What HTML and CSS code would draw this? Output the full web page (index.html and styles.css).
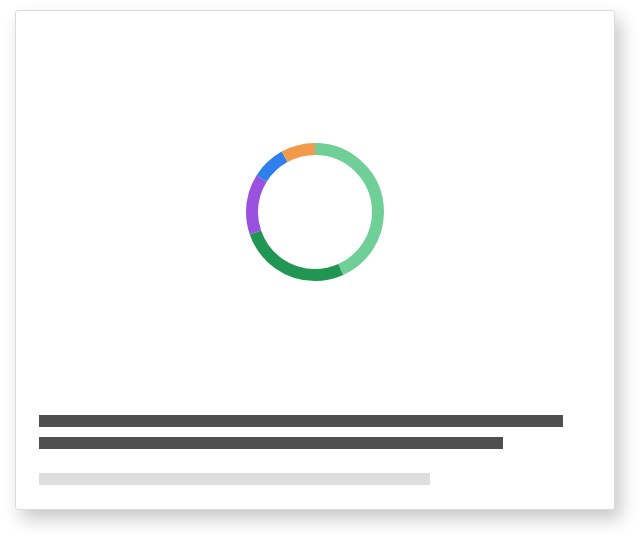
FILE: index.html
```html
<!DOCTYPE html>
<html>
<head>
<meta charset="utf-8">
<link rel="stylesheet" href="styles.css">
</head>
<body>
<div class="card">
  <div class="chart-area">
    <svg class="donut" width="140" height="140" viewBox="0 0 140 140">
      <g transform="rotate(-90 70 70)" fill="none" stroke-width="12">
        <circle cx="70" cy="70" r="63" stroke="#6fcf97" stroke-dasharray="171.1 395.84" stroke-dashoffset="0"/>
        <circle cx="70" cy="70" r="63" stroke="#219653" stroke-dasharray="104.4 395.84" stroke-dashoffset="-171.1"/>
        <circle cx="70" cy="70" r="63" stroke="#9b51e0" stroke-dasharray="56.1 395.84" stroke-dashoffset="-275.5"/>
        <circle cx="70" cy="70" r="63" stroke="#2f80ed" stroke-dasharray="31.9 395.84" stroke-dashoffset="-331.6"/>
        <circle cx="70" cy="70" r="63" stroke="#f2994a" stroke-dasharray="32.3 395.84" stroke-dashoffset="-363.5"/>
      </g>
    </svg>
  </div>
  <div class="lines">
    <div class="line dark w1"></div>
    <div class="line dark w2"></div>
    <div class="line light w3"></div>
  </div>
</div>
</body>
</html>
```
FILE: styles.css
```css
html, body {
  margin: 0;
  padding: 0;
  background: #ffffff;
}
body {
  padding: 10px 25px 30px 15px;
  min-height: 540px;
  box-sizing: border-box;
}
.card {
  box-sizing: border-box;
  width: 600px;
  height: 500px;
  background: #ffffff;
  border: 1px solid #dcdcdc;
  border-radius: 3px;
  box-shadow: 6px 9px 18px rgba(0, 0, 0, 0.22);
  display: flex;
  flex-direction: column;
}
.chart-area {
  height: 401px;
  display: flex;
  align-items: center;
  justify-content: center;
}
.donut {
  display: block;
}
.lines {
  margin-top: 3px;
  padding-left: 23px;
  display: flex;
  flex-direction: column;
}
.line {
  height: 12px;
}
.dark {
  background: #4f4f4f;
}
.light {
  background: #dedede;
}
.w1 { width: 524px; }
.w2 { width: 464px; margin-top: 10px; }
.w3 { width: 391px; margin-top: 24px; }
```
